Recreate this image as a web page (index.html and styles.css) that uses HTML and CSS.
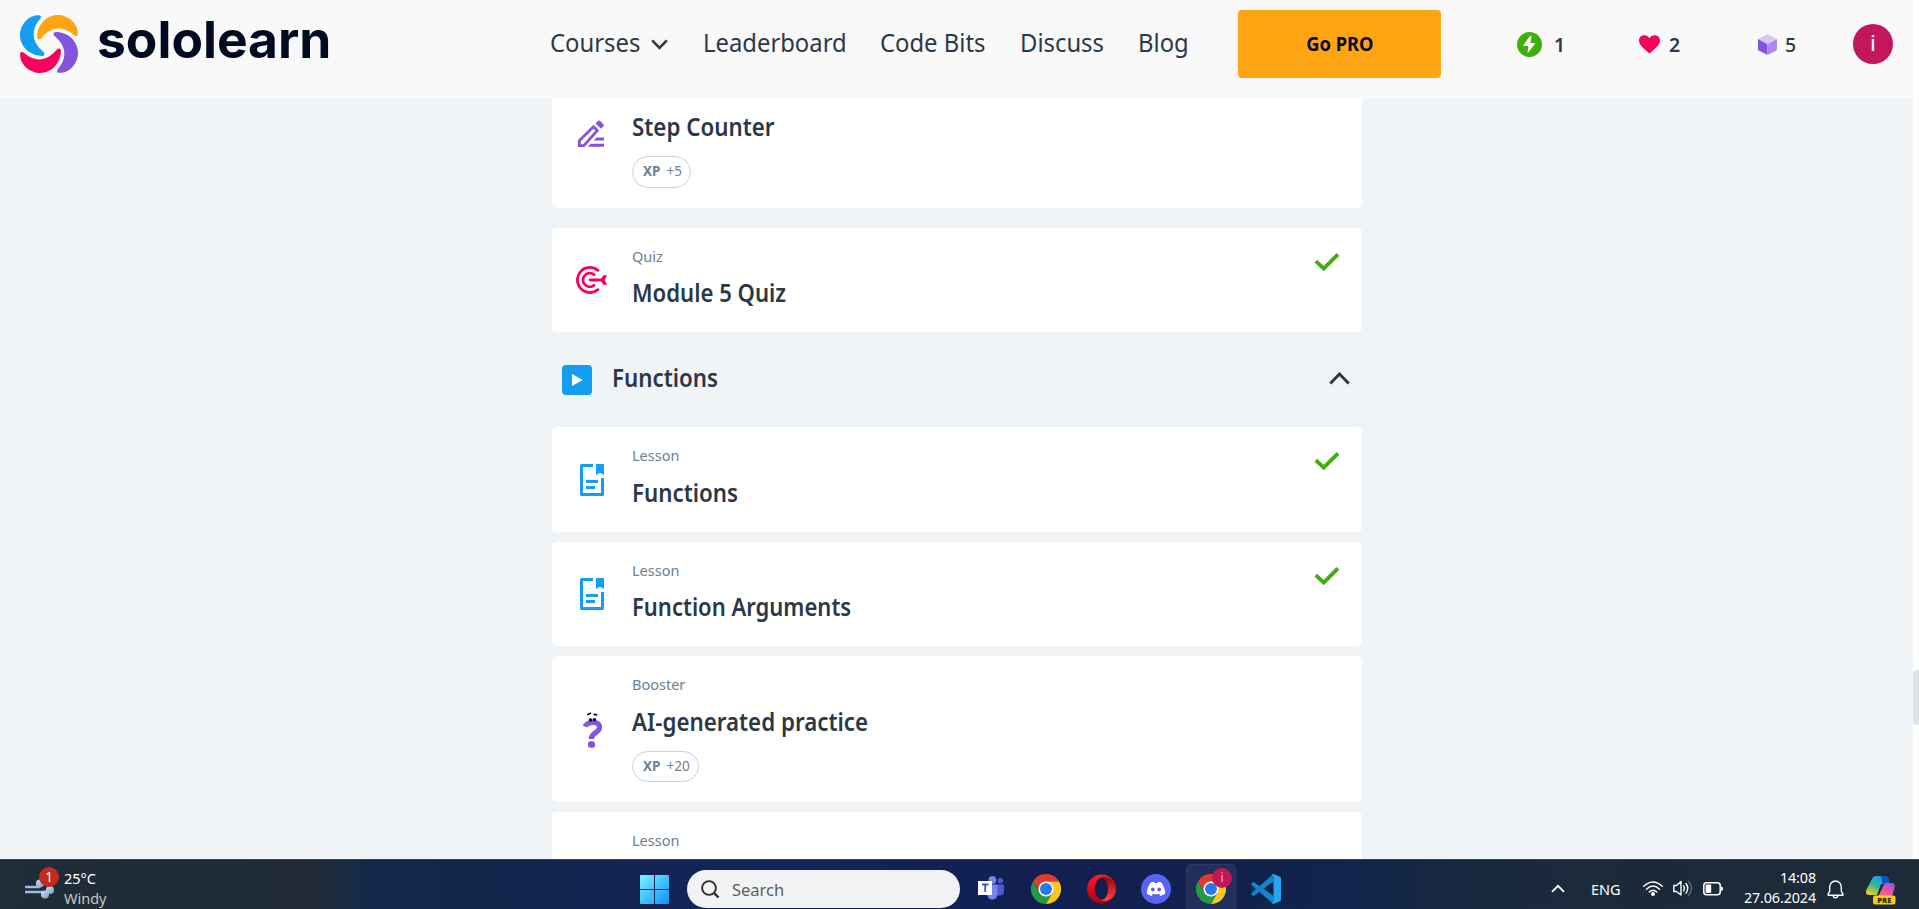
FILE: index.html
```html
<!DOCTYPE html>
<html lang="en">
<head>
<meta charset="utf-8">
<title>Sololearn</title>
<link rel="stylesheet" href="styles.css">
</head>
<body>
<svg class="defs" width="0" height="0">
  <defs>
    <linearGradient id="gWin" x1="0" y1="0" x2="1" y2="1"><stop offset="0" stop-color="#7df3ff"/><stop offset=".5" stop-color="#43c3fc"/><stop offset="1" stop-color="#0a95ff"/></linearGradient>
    <linearGradient id="gOpera" x1="0" y1="0" x2="0" y2="1"><stop offset="0" stop-color="#ff1b2d"/><stop offset="1" stop-color="#a80014"/></linearGradient>
    <linearGradient id="gOperaR" x1="0" y1="0" x2="0" y2="1"><stop offset="0" stop-color="#9c0000"/><stop offset="1" stop-color="#ff4b4b"/></linearGradient>
    <linearGradient id="gCopL" x1=".7" y1="0" x2=".2" y2="1"><stop offset="0" stop-color="#1c95f5"/><stop offset=".5" stop-color="#30b4a0"/><stop offset="1" stop-color="#e8d21c"/></linearGradient>
    <linearGradient id="gCopR" x1=".8" y1="0" x2=".2" y2="1"><stop offset="0" stop-color="#a34df0"/><stop offset=".5" stop-color="#ee559c"/><stop offset="1" stop-color="#fb8a4f"/></linearGradient>
    <linearGradient id="gWind" x1="0" y1="0" x2="1" y2="1"><stop offset="0" stop-color="#d5e5f6"/><stop offset="1" stop-color="#6f9cc9"/></linearGradient>
    <path id="blade" d="M118 45C85 43 60 75 60 105C60 140 90 168 127 168C134 168 136 161 131 156C94 125 92 90 121 56C125 51 124 45 118 45Z"/>
    <symbol id="check" viewBox="0 0 26 20"><path d="M1.8 9.200 9.700 16.600 24 2.400" fill="none" stroke="#40ae0c" stroke-width="3.900"/></symbol>
    <symbol id="lesson" viewBox="0 0 24 32"><path d="M13 1.5H1.5v29h21V14" fill="none" stroke="#149ef2" stroke-width="3" stroke-linejoin="round"/><path d="M16 0h7a1 1 0 0 1 1 1v10l-4-2.200L16 11ZM6 16h12v3H6ZM6 22h9v3H6Z" fill="#149ef2"/></symbol>
    <symbol id="chrome" viewBox="0 0 30 30">
      <path d="M2 7.500A15 15 0 0 1 28 7.500H15L9 18.600Z" fill="#e33b2e"/>
      <path d="M2 7.500A15 15 0 0 0 15 30L21.500 18.700 8.500 18.700Z" fill="#249a47"/>
      <path d="M28 7.500A15 15 0 0 1 15 30L21.500 18.700 21.500 11 15 7.500Z" fill="#fdc51d"/>
      <circle cx="15" cy="15" r="7.600" fill="#fff"/><circle cx="15" cy="15" r="6" fill="#2b78ee"/>
    </symbol>
  </defs>
</svg>

<div class="page">
  <header class="header">
    <a class="brand">
      <svg class="brand-mark" viewBox="60 44.500 175 175">
        <use href="#blade" fill="#149ef2"/>
        <use href="#blade" fill="#ffa412" transform="rotate(90 147.500 132)"/>
        <use href="#blade" fill="#8454dc" transform="rotate(180 147.500 132)"/>
        <use href="#blade" fill="#f9005c" transform="rotate(270 147.500 132)"/>
      </svg>
      <span class="brand-name">sololearn</span>
    </a>
    <nav class="nav">
      <a class="nav-link nav-courses"><span>Courses</span></a>
      <svg class="nav-caret" viewBox="0 0 17 11"><path d="M1.200 1.300 8.500 8.800 15.800 1.300" fill="none" stroke="#2d3846" stroke-width="2.600"/></svg>
      <a class="nav-link nav-leader"><span>Leaderboard</span></a>
      <a class="nav-link nav-bits"><span>Code Bits</span></a>
      <a class="nav-link nav-discuss"><span>Discuss</span></a>
      <a class="nav-link nav-blog"><span>Blog</span></a>
    </nav>
    <button class="go-pro"><span>Go PRO</span></button>
    <div class="stats">
      <div class="stat stat-streak"><svg width="25" height="25" viewBox="0 0 25 25"><circle cx="12.500" cy="12.500" r="12.500" fill="#40ae0c"/><path d="M12.500 4.500 6.500 13q-.4.9.6 1h4.400l-1 6.200q.3.900 1 .1L17.900 12q.4-1-.5-1h-4l1-6.200q-.6-1.200-1.900-.3Z" fill="#fff"/></svg><span>1</span></div>
      <div class="stat stat-hearts"><svg width="21" height="19" viewBox="0 0 21 19"><path d="M10.500 18.500C4 13 0 9.500 0 5.500 0 2.500 2.300.3 5.200.3 7.500.3 9.500 1.400 10.500 3.200 11.500 1.400 13.500.3 15.800.3 18.700.3 21 2.500 21 5.500 21 9.500 17 13 10.500 18.500Z" fill="#f9005c"/></svg><span>2</span></div>
      <div class="stat stat-bits"><svg width="19" height="21" viewBox="0 0 19 21"><path d="M9.500 0 19 5 9.500 10.300 0 5Z" fill="#d6c9f4"/><path d="M0 5 9.500 10.300V21L.8 16.500Q0 16 0 15Z" fill="#8454dc"/><path d="M19 5 9.500 10.300V21l8.700-4.500Q19 16 19 15Z" fill="#ad88f2"/></svg><span>5</span></div>
    </div>
    <div class="avatar">i</div>
  </header>

  <main class="content">
    <section class="card card-cut">
      <svg class="card-icon icon-practice" viewBox="0 0 26 27"><path d="M1.400 25.600V20.500L15.500 6.800 19.300 10.500 5.800 25.600Z" fill="none" stroke="#8454dc" stroke-width="2.800"/><path d="M17.600 3.600 20 .8Q21 0 22 .8L25.500 4.400Q26.300 5.200 25.500 6.200L23 8.800ZM18.500 17.500H26v3H15.800ZM12.800 23.700H26v3H9.800Z" fill="#8454dc"/></svg>
      <div class="card-body">
        <h3 class="title t-step"><span>Step Counter</span></h3>
        <div class="pill"><b>XP</b><span>+5</span></div>
      </div>
    </section>

    <section class="card card-quiz">
      <svg class="card-icon icon-quiz" viewBox="0 0 31 28"><g fill="none" stroke="#f9005c" stroke-width="2.800" stroke-linecap="round"><path d="M22 4.300A12.600 12.600 0 1 0 22 23.700"/><path d="M18 8.700A6.800 6.800 0 1 0 18 19.300"/><path d="M14 14H26"/></g><path d="M24 14 27.500 9.300H31L28.800 14 31 18.700H27.500Z" fill="#f9005c"/></svg>
      <div class="card-body">
        <div class="kind">Quiz</div>
        <h3 class="title t-module"><span>Module 5 Quiz</span></h3>
      </div>
      <svg class="check"><use href="#check"/></svg>
    </section>

    <div class="module">
      <svg class="module-icon" viewBox="0 0 30 30"><rect width="30" height="30" rx="4" fill="#149ef2"/><path d="M10 9 20.800 15 10 21Z" fill="#fff"/></svg>
      <h2 class="title t-func"><span>Functions</span></h2>
      <svg class="module-caret" viewBox="0 0 21 13"><path d="M1.300 11.600 10.500 2 19.700 11.600" fill="none" stroke="#2d3846" stroke-width="2.900"/></svg>
    </div>

    <section class="card card-func">
      <svg class="card-icon icon-lesson"><use href="#lesson"/></svg>
      <div class="card-body">
        <div class="kind">Lesson</div>
        <h3 class="title t-func"><span>Functions</span></h3>
      </div>
      <svg class="check"><use href="#check"/></svg>
    </section>

    <section class="card card-args">
      <svg class="card-icon icon-lesson"><use href="#lesson"/></svg>
      <div class="card-body">
        <div class="kind">Lesson</div>
        <h3 class="title t-args"><span>Function Arguments</span></h3>
      </div>
      <svg class="check"><use href="#check"/></svg>
    </section>

    <section class="card card-ai">
      <svg class="card-icon icon-booster" viewBox="0 0 22 36"><path d="M3 14.500C5 9.500 17.500 8 17.500 15.500 17.500 21 9.300 20 9.300 27" fill="none" stroke="#8454dc" stroke-width="5.200"/><rect x="6" y="29.300" width="7" height="6.500" rx="2.500" fill="#8454dc"/><circle cx="8.500" cy="8" r="1.800" fill="#080c25"/><circle cx="12.500" cy="7.800" r="1.800" fill="#080c25"/><path d="M5.300 2.800 9 1M11.500 2.300 15.300 2.900" stroke="#080c25" stroke-width="1.700"/></svg>
      <div class="card-body">
        <div class="kind">Booster</div>
        <h3 class="title t-ai"><span>AI-generated practice</span></h3>
        <div class="pill pill-wide"><b>XP</b><span>+20</span></div>
      </div>
    </section>

    <section class="card card-last">
      <div class="card-body card-body-solo">
        <div class="kind">Lesson</div>
      </div>
    </section>
  </main>
  <div class="scroll-thumb"></div>
</div>

<footer class="taskbar">
  <div class="weather">
    <svg class="wind" viewBox="0 0 30 20"><path d="M0 8H14M0 13H20" stroke="#9fbcdc" stroke-width="2.600" stroke-linecap="round"/><circle cx="15" cy="4.500" r="4" fill="url(#gWind)"/><circle cx="25" cy="11" r="4" fill="url(#gWind)"/><circle cx="20" cy="15.500" r="4" fill="url(#gWind)"/></svg>
    <span class="alert">1</span>
    <div class="weather-text"><div>25°C</div><div class="dim">Windy</div></div>
  </div>
  <div class="apps">
    <svg class="start" viewBox="0 0 29 29"><path d="M1 0H14V14H0V1Q0 0 1 0ZM15 0H28Q29 0 29 1V14H15ZM0 15H14V29H1Q0 29 0 28ZM15 15H29V28Q29 29 28 29H15Z" fill="url(#gWin)"/></svg>
    <div class="search"><svg width="19" height="19" viewBox="0 0 19 19"><circle cx="8" cy="8" r="6.900" fill="none" stroke="#2a2d2f" stroke-width="1.900"/><path d="M13 13 17.500 17.500" stroke="#2a2d2f" stroke-width="2.400"/></svg><span>Search</span></div>
    <svg class="teams" viewBox="0 0 26 24"><circle cx="22.300" cy="4.700" r="2.700" fill="#5059c9"/><path d="M18 8.500H26V16Q25.500 19.500 21 19.500H18Z" fill="#5059c9"/><circle cx="14.400" cy="4" r="3.900" fill="#7b83eb"/><path d="M9 8.500H19.500V17Q19.500 23.500 14.500 23.500 9.500 23.500 9 18Z" fill="#7b83eb"/><rect y="5" width="14" height="14" fill="#fff"/><path d="M4 8.500H10.500M7.200 8.500V16" stroke="#4b53bc" stroke-width="1.800"/></svg>
    <svg class="chrome"><use href="#chrome"/></svg>
    <svg class="opera" viewBox="0 0 29 30"><circle cx="14.500" cy="15" r="14.500" fill="url(#gOpera)"/><path d="M10.500 5.500Q14 2.300 19.500 3.200 28.500 6 28.800 15 28.500 24 19.500 26.800 14 27.700 10.500 24.500Z" fill="url(#gOperaR)"/><ellipse cx="14.500" cy="15" rx="6.600" ry="11" fill="#121f4b"/></svg>
    <svg class="discord" viewBox="0 0 30 30"><circle cx="15" cy="15" r="15" fill="#5865f2"/><path d="M9.500 8.800Q11 8 13 7.800L13.600 9Q15 8.800 16.400 9L17 7.800Q19 8 20.500 8.800 24 13.500 24.200 19.500 22 21.200 19.300 21.900L18 19.800Q15 20.800 12 19.800L10.700 21.900Q8 21.200 5.800 19.500 6 13.500 9.500 8.800Z" fill="#fff"/><ellipse cx="11.800" cy="15.500" rx="1.800" ry="2" fill="#5865f2"/><ellipse cx="18.200" cy="15.500" rx="1.800" ry="2" fill="#5865f2"/></svg>
    <div class="active-app"><svg class="chrome"><use href="#chrome"/></svg><span class="profile">i</span></div>
    <svg class="vscode" viewBox="0 0 30 30"><path d="M0 10 2.500 7.700 22.500 22V30L1 11.500Z" fill="#1287cf"/><path d="M0 20 2.500 22.300 22.500 7.500V0L1 18.500Z" fill="#1083cc"/><path d="M22.500 0 29 2.800Q30 3.300 30 4.500V25.500Q30 26.700 29 27.200L22.500 30Q21.500 30 21 29 22.500 28.500 22.500 27V3Q22.500 1.500 21 1Q21.500 0 22.500 0Z" fill="#24a8f2"/></svg>
  </div>
  <div class="tray">
    <svg class="tray-up" viewBox="0 0 14 9"><path d="M1 7.800 7 1.800 13 7.800" fill="none" stroke="#fff" stroke-width="1.900"/></svg>
    <span class="lang">ENG</span>
    <svg class="wifi" viewBox="0 0 20 15"><g fill="none" stroke="#fff" stroke-width="1.400" stroke-linecap="round"><path d="M.8 5.300Q10-3.500 19.200 5.300M3.500 8.200Q10 2 16.500 8.200M6.200 10.900Q10 7.400 13.800 10.900"/></g><circle cx="10" cy="12.900" r="2" fill="#fff"/></svg>
    <svg class="sound" viewBox="0 0 20 17"><g fill="none" stroke="#fff" stroke-width="1.400" stroke-linecap="round" stroke-linejoin="round"><path d="M.8 5.500H3.500L8 1.500V15L3.500 11.500H.8Z"/><path d="M10.700 5.800Q12.300 8.300 10.700 10.900M13 3.500Q16.500 8.300 13 13.200"/><path d="M15.500 1.300Q21.500 8.300 15.500 15.500" opacity=".3"/></g></svg>
    <svg class="battery" viewBox="0 0 21 14"><rect x=".8" y=".8" width="16.400" height="12" rx="2.800" fill="none" stroke="#fff" stroke-width="1.500"/><rect x="2.600" y="2.600" width="5.600" height="8.400" rx="1" fill="#fff"/><path d="M18 4.500Q20 4.500 20 6.800T18 9.100Z" fill="#fff"/></svg>
    <div class="clock"><div class="time">14:08</div><div class="date">27.06.2024</div></div>
    <svg class="bell" viewBox="0 0 17 19"><path d="M1 14.500 2.700 11V7A5.800 6 0 0 1 14.300 7V11L16 14.500Q16.200 15.300 15.400 15.300H1.600Q.8 15.300 1 14.500ZM6.200 15.500Q6.300 17.800 8.500 17.800T10.800 15.500" fill="none" stroke="#fff" stroke-width="1.400"/></svg>
    <svg class="copilot" viewBox="0 0 30 29"><path d="M6.500 2Q7.500 0 10 0H19Q21.500 0 22.500 3L24 8H15L11 19H3Q-1 19 .3 14Z" fill="url(#gCopL)"/><path d="M15 0H19Q21.500 0 22.500 3L24 7H20Q18 7 17.200 9.500Z" fill="#124fc4"/><path d="M17.500 9.500Q18.500 7 21 7H26Q29.500 7 28.500 12L27 17Q25.500 23 21 23H9.500Q11.500 22.500 12.500 19.500L13 19Z" fill="url(#gCopR)"/><rect x="7" y="19.500" width="22.500" height="9" rx="2" fill="#fdc70c"/><text class="pre" x="18.300" y="26.700" text-anchor="middle">PRE</text></svg>
  </div>
</footer>
</body>
</html>
```
FILE: styles.css
```css
* { box-sizing: border-box; }
body {
  margin: 0;
  width: 1919px;
  height: 909px;
  overflow: hidden;
  background: #fff;
  color: #2d3846;
  font-family: "Noto Sans", "Open Sans", sans-serif;
}
svg { display: block; flex: none; }
.defs { position: absolute; }
.page { position: relative; width: 1919px; height: 859px; overflow: hidden; }

/* Header */
.header {
  display: flex;
  align-items: flex-start;
  width: 1913px;
  height: 98px;
  background: #f9f9f9;
}
.brand { display: flex; width: 550px; padding: 15px 0 0 20px; }
.brand-mark { width: 58px; height: 58px; margin-right: 19px; }
.brand-name {
  margin-top: -8px;
  color: #000a21;
  font: 650 51.500px/64px Inter, sans-serif;
  white-space: nowrap;
}
.nav { display: flex; width: 688px; padding-top: 25px; }
.nav-link { font-size: 25px; line-height: 34px; white-space: nowrap; }
.nav-courses { width: 101px; }
.nav-caret { width: 17px; height: 11px; margin: 14px 35px 0 0; }
.nav-leader { width: 177px; }
.nav-bits { width: 140px; }
.nav-discuss { width: 118px; }

/* Slightly narrowed text faces */
.nav-link span, .title span { display: inline-block; transform: scaleX(.953); transform-origin: 0 50%; }
.title span { transform: scaleX(.893); }
.t-module span { transform: scaleX(.885); }
.t-args span { transform: scaleX(.88); }

.go-pro {
  width: 203px;
  height: 68px;
  margin-top: 10px;
  padding: 0;
  border: 0;
  border-radius: 4px;
  background: #ffa412;
  color: #080c25;
  font: 700 19.500px/26px "Noto Sans", sans-serif;
}
.go-pro span { display: inline-block; transform: scaleX(.94); }
.stats { display: flex; width: 412px; padding: 32px 0 0 76px; }
.stat { display: flex; align-items: center; height: 25px; font-size: 19.500px; font-weight: 600; }
.stat span { margin-top: -1px; }
.stat-streak { width: 122px; gap: 12px; }
.stat-hearts { width: 119px; gap: 9px; }
.stat-bits { gap: 8px; font-weight: 500; }
.avatar {
  width: 40px;
  height: 40px;
  margin-top: 24px;
  border-radius: 50%;
  background: #c2185b;
  color: #fff;
  font: 22px/40px Roboto, sans-serif;
  text-align: center;
}

/* Course list */
.content { width: 1913px; height: 761px; padding-left: 552px; overflow: hidden; background: #f0f4f7; }
.card {
  display: flex;
  align-items: center;
  width: 810px;
  margin-bottom: 10px;
  padding: 0 22px 0 24px;
  border-radius: 5px;
  background: #fff;
}
.card-icon { margin-right: 25px; }
.card-body { flex: 1; align-self: flex-start; padding-top: 18px; }
.card-cut { height: 110px; margin-bottom: 20px; border-radius: 0 0 5px 5px; align-items: flex-start; }
.card-cut .card-body { padding-top: 12px; }
.icon-practice { width: 26px; height: 27px; margin: 22px 28px 0 2px; }
.card-quiz { height: 104px; margin-bottom: 0; }
.icon-quiz { width: 31px; height: 28px; }
.icon-lesson { width: 24px; height: 32px; margin: 0 28px 0 4px; }
.icon-booster { width: 22px; height: 36px; margin: 0 28px 0 6px; transform: translateY(1px); }
.card-func { height: 105px; }
.card-args { height: 104px; }
.card-ai { height: 146px; }
.card-last { height: 105px; margin-bottom: 0; }
.card-body-solo { padding-left: 56px; }
.kind { height: 20px; color: #6b8196; font-size: 14.500px; line-height: 20px; }
.title { margin: 10px 0 0; font-size: 25px; font-weight: 650; line-height: 32px; white-space: nowrap; }
.card-cut .title { margin-top: 0; }
.card-func .title, .card-ai .title { margin-top: 11px; }
.check { align-self: flex-start; width: 26px; height: 20px; margin-top: 24px; }
.pill {
  display: flex;
  gap: 6px;
  width: 59px;
  height: 32px;
  margin-top: 14px;
  padding-left: 10px;
  border: 1px solid #c8d2db;
  border-radius: 16px;
  color: #6b8196;
  font-size: 13.500px;
  line-height: 29px;
}
.pill-wide { width: 67px; height: 31px; margin-top: 14px; }
.module { display: flex; align-items: center; height: 95px; padding: 0 12px 0 10px; width: 810px; }
.module-icon { width: 30px; height: 30px; margin-right: 20px; }
.module .title { flex: 1; margin: -5px 0 0; }
.module-caret { width: 21px; height: 13px; margin-top: -3px; }
.scroll-thumb { position: absolute; top: 670px; right: 0; width: 6px; height: 55px; border-radius: 4px 0 0 4px; background: #e0e4e7; }

/* Taskbar */
.taskbar {
  display: flex;
  width: 1919px;
  height: 50px;
  border-top: 1px solid #3b4652;
  background: linear-gradient(90deg, #1f2d38 0, #202b35 310px, #142a4b 370px, #12254a 480px, #11245a 760px, #121f4f 1100px, #11244c 1340px, #1a2a3d 1500px, #1d2a37 1919px);
  color: #fff;
}
.weather { position: relative; display: flex; width: 640px; padding-left: 25px; }
.wind { width: 30px; height: 20px; margin: 19px 9px 0 0; }
.alert {
  position: absolute;
  left: 39px;
  top: 7px;
  width: 20px;
  height: 20px;
  border-radius: 50%;
  background: #c42b1c;
  font-size: 13.500px;
  line-height: 20px;
  text-align: center;
}
.weather-text { padding-top: 8px; font-size: 14.500px; line-height: 20px; }
.dim { color: #c3c8cc; }
.apps { display: flex; width: 911px; }
.start { width: 29px; height: 29px; margin: 15px 18px 0 0; }
.search {
  display: flex;
  align-items: center;
  width: 273px;
  height: 38px;
  margin: 10px 18px 0 0;
  padding-left: 14px;
  border-radius: 19px;
  background: #f1f2f4;
  color: #5c5f62;
  font-size: 16.500px;
  gap: 12px;
}
.teams { width: 26px; height: 24px; margin: 16px 27px 0 0; }
.chrome { width: 30px; height: 30px; margin: 14px 26px 0 0; }
.opera { width: 29px; height: 30px; margin: 14px 25px 0 0; }
.discord { width: 30px; height: 30px; margin: 14px 15px 0 0; }
.active-app { position: relative; width: 50px; height: 45px; margin: 4px 15px 0 0; padding: 10px 0 0 10px; border: 1px solid #2b3963; border-bottom: 0; border-radius: 5px 5px 0 0; background: #212f5c; }
.active-app .chrome { margin: -1px 0 0 -1px; }
.profile { position: absolute; left: 25px; top: 3px; width: 20px; height: 20px; border-radius: 50%; background: #c2185b; color: #ecb5ca; font-size: 12px; line-height: 19px; text-align: center; }
.vscode { width: 30px; height: 30px; margin-top: 14px; }
.tray { display: flex; width: 368px; }
.tray-up { width: 14px; height: 9px; margin: 24px 26px 0 0; }
.lang { width: 52px; font-size: 14.500px; line-height: 20px; margin-top: 19px; }
.wifi { width: 20px; height: 15px; margin: 21px 10px 0 0; }
.sound { width: 20px; height: 17px; margin: 20px 10px 0 0; }
.battery { width: 21px; height: 14px; margin-top: 22px; }
.clock { width: 92px; margin-right: 11px; padding-top: 8px; font-size: 14.300px; line-height: 20px; text-align: right; letter-spacing: -.1px; }
.bell { width: 17px; height: 19px; margin: 20px 22px 0 0; }
.copilot { width: 30px; height: 29px; margin-top: 16px; }
.pre { fill: #2b2410; font: 800 7.500px "Open Sans", sans-serif; }
```
